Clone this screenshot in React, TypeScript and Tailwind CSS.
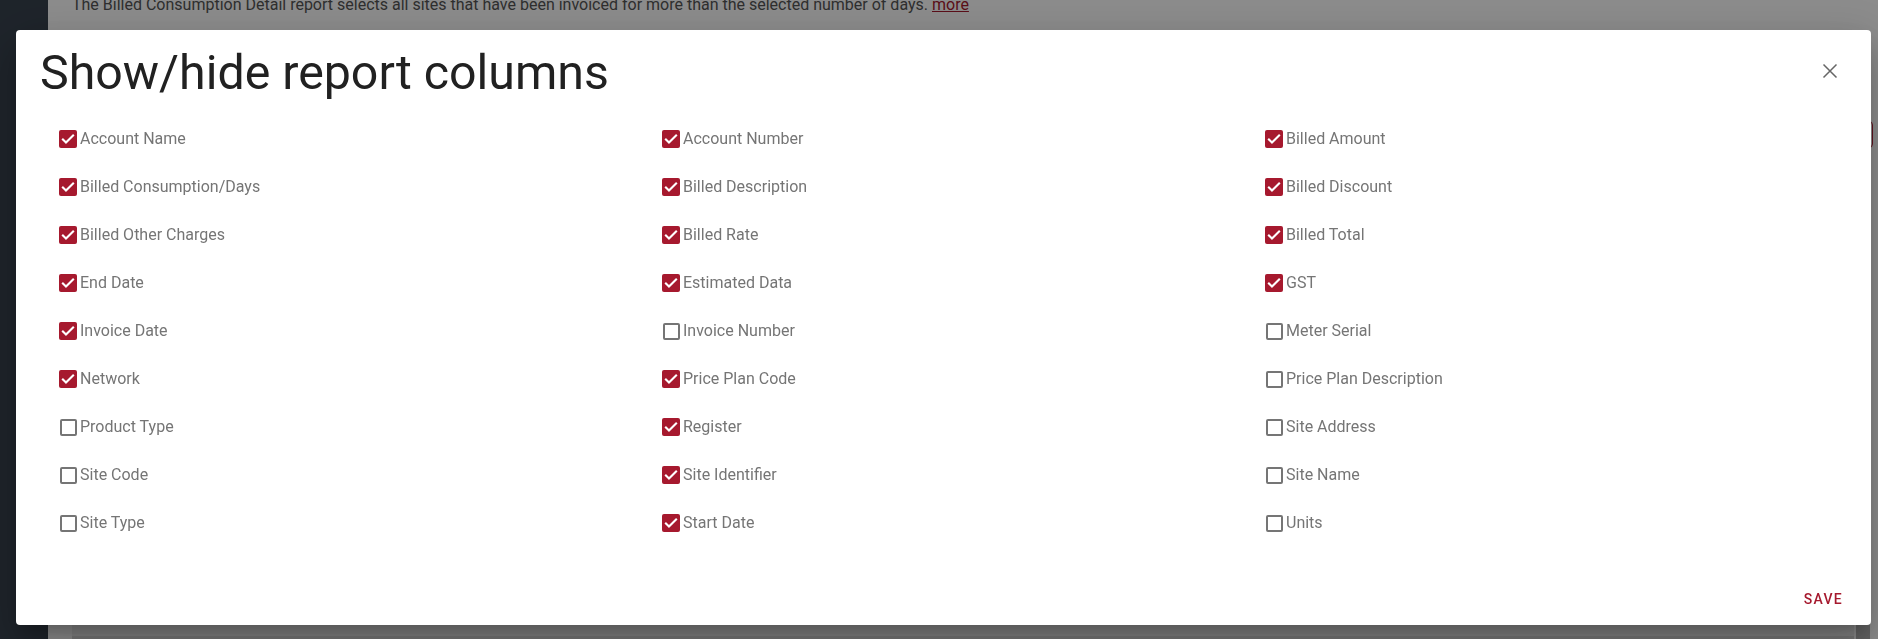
import React from "react";

type Item = { label: string; checked: boolean };

const items: Item[] = [
  { label: "Account Name", checked: true },
  { label: "Account Number", checked: true },
  { label: "Billed Amount", checked: true },
  { label: "Billed Consumption/Days", checked: true },
  { label: "Billed Description", checked: true },
  { label: "Billed Discount", checked: true },
  { label: "Billed Other Charges", checked: true },
  { label: "Billed Rate", checked: true },
  { label: "Billed Total", checked: true },
  { label: "End Date", checked: true },
  { label: "Estimated Data", checked: true },
  { label: "GST", checked: true },
  { label: "Invoice Date", checked: true },
  { label: "Invoice Number", checked: false },
  { label: "Meter Serial", checked: false },
  { label: "Network", checked: true },
  { label: "Price Plan Code", checked: true },
  { label: "Price Plan Description", checked: false },
  { label: "Product Type", checked: false },
  { label: "Register", checked: true },
  { label: "Site Address", checked: false },
  { label: "Site Code", checked: false },
  { label: "Site Identifier", checked: true },
  { label: "Site Name", checked: false },
  { label: "Site Type", checked: false },
  { label: "Start Date", checked: true },
  { label: "Units", checked: false },
];

function Box({ checked }: { checked: boolean }) {
  if (checked) {
    return (
      <span className="flex h-[18px] w-[18px] shrink-0 items-center justify-center rounded-[2px] bg-[#a6192e]">
        <svg width="18" height="18" viewBox="0 0 18 18" fill="none">
          <path
            d="M3.2 8.8 L7 12.6 L14.8 4.8"
            stroke="#ffffff"
            strokeWidth="2.1"
            strokeLinecap="butt"
            strokeLinejoin="miter"
          />
        </svg>
      </span>
    );
  }
  return (
    <span className="flex h-[18px] w-[18px] shrink-0 items-center justify-center">
      <span className="h-[17px] w-[17px] rounded-[2px] border-2 border-[#757575]" />
    </span>
  );
}

export default function App() {
  return (
    <div className="relative h-[639px] w-[1878px] overflow-hidden font-['Roboto',sans-serif]">
      {/* underlying page */}
      <div className="flex h-full w-full">
        <div className="h-full w-[48px] bg-[#38424e]" />
        <div className="flex h-full flex-1 flex-col bg-white">
          <p className="mt-[-7px] pl-[24px] text-[16px] leading-[24px] text-[#555555]">
            The Billed Consumption Detail report selects all sites that have been invoiced for more than the selected number of days.{" "}
            <span className="text-[#a6192e] underline">more</span>
          </p>
          <div className="mt-[104px] flex justify-end pr-[5px]">
            <div className="h-[27px] w-[140px] rounded-[4px] border border-[#b01f35]" />
          </div>
          <div className="mt-auto flex h-[90px] pl-[24px]">
            <div className="flex-1 border-b-[3px] border-[#d8d8d8] bg-[#eeeeee]" />
            <div className="ml-[2px] w-[14px] bg-[#b5b5b5]" />
            <div className="w-[8px]" />
          </div>
        </div>
      </div>

      {/* overlay */}
      <div className="fixed inset-0 bg-black/45 pl-[16px] pt-[30px]">
        <div className="flex h-[595px] w-[1855px] flex-col rounded-[4px] bg-white shadow-[0_11px_15px_-7px_rgba(0,0,0,0.2),0_24px_38px_3px_rgba(0,0,0,0.14),0_9px_46px_8px_rgba(0,0,0,0.12)]">
          <div className="flex items-start justify-between pl-[24px] pr-[21px] pt-[15px]">
            <h2 className="h-[56px] text-[48.3px] font-normal leading-[56px] text-[#212121]">
              Show/hide report columns
            </h2>
            <button className="mt-[6px] flex h-[40px] w-[40px] items-center justify-center">
              <svg width="16" height="16" viewBox="0 0 16 16" fill="none">
                <path d="M1.5 1.5 L14.5 14.5 M14.5 1.5 L1.5 14.5" stroke="#666666" strokeWidth="1.5" />
              </svg>
            </button>
          </div>

          <div className="mt-[14px] grid grid-cols-[603px_603px_1fr] pl-[43px]">
            {items.map((it) => (
              <label key={it.label} className="flex h-[48px] items-center">
                <Box checked={it.checked} />
                <span className="ml-[3px] text-[16px] leading-[24px] text-[#757575]">{it.label}</span>
              </label>
            ))}
          </div>

          <div className="mt-auto flex justify-end pb-[8px] pr-[20px]">
            <button className="h-[36px] px-[8px] text-[14px] font-medium uppercase tracking-[1.25px] text-[#a6192e]">
              Save
            </button>
          </div>
        </div>
      </div>
    </div>
  );
}
